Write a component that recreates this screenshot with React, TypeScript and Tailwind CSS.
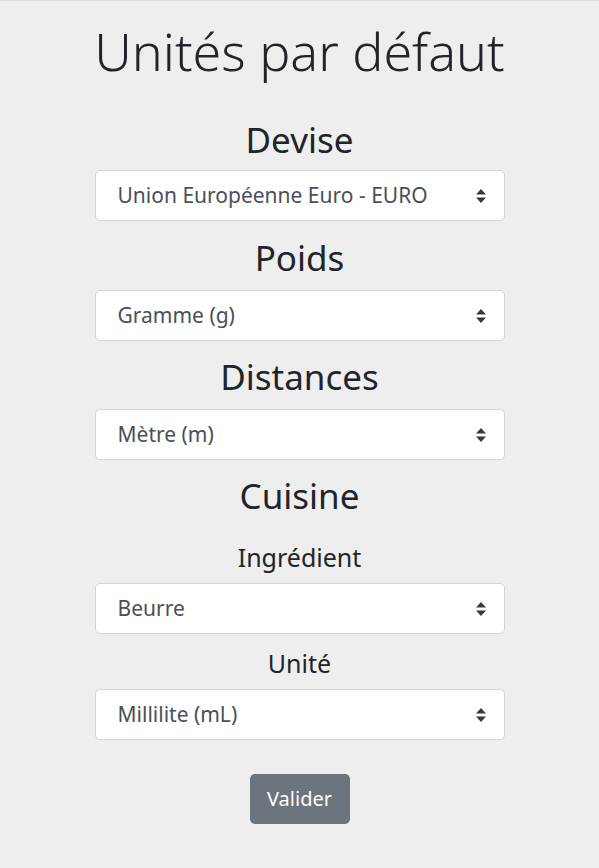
import { useState } from "react";

const FONT = { fontFamily: '"Noto Sans", "Open Sans", sans-serif' };

function Arrows() {
  return (
    <svg
      className="pointer-events-none absolute right-[19px] top-1/2 h-[14px] w-[10px] -translate-y-1/2"
      viewBox="0 0 4 5.6"
    >
      <path d="M2 0L0 2.2h4z M2 5.6L0 3.4h4z" fill="#343a40" />
    </svg>
  );
}

function Select({ value, options }: { value: string; options: string[] }) {
  const [v, setV] = useState(value);
  return (
    <div className="relative w-[410px]">
      <select
        value={v}
        onChange={(e) => setV(e.target.value)}
        className="h-[51px] w-full appearance-none rounded-[5px] border border-[#ced4da] bg-white pl-[22px] pr-10 text-[21px] text-[#495057] outline-none"
        style={FONT}
      >
        {options.map((o) => (
          <option key={o}>{o}</option>
        ))}
      </select>
      <Arrows />
    </div>
  );
}

export default function App() {
  return (
    <div className="min-h-[868px] border-t border-[#dcdcdc] bg-[#eeeeee] text-[#212529]" style={FONT}>
      <div className="flex flex-col items-center">
        <h1 className="mt-[13px] text-[52px] leading-[74px] font-light">Unités par défaut</h1>

        <h2 className="mt-[31px] mb-[9px] text-[35px] leading-[42px]">Devise</h2>
        <Select value="Union Européenne Euro - EURO" options={["Union Européenne Euro - EURO", "Dollar américain - USD"]} />

        <h2 className="mt-[16px] mb-[11px] text-[35px] leading-[42px]">Poids</h2>
        <Select value="Gramme (g)" options={["Gramme (g)", "Kilogramme (kg)"]} />

        <h2 className="mt-[15px] mb-[11px] text-[35px] leading-[42px]">Distances</h2>
        <Select value="Mètre (m)" options={["Mètre (m)", "Kilomètre (km)"]} />

        <h2 className="mt-[15px] text-[35px] leading-[42px]">Cuisine</h2>

        <h4 className="mt-[24px] mb-[10px] text-[25px] leading-[32px]">Ingrédient</h4>
        <Select value="Beurre" options={["Beurre", "Farine", "Sucre"]} />

        <h4 className="mt-[13px] mb-[10px] text-[25px] leading-[32px]">Unité</h4>
        <Select value="Millilite (mL)" options={["Millilite (mL)", "Gramme (g)"]} />

        <button className="mt-[34px] h-[50px] w-[100px] rounded-[5px] bg-[#6c757d] text-[20px] text-white">
          Valider
        </button>
      </div>
    </div>
  );
}
